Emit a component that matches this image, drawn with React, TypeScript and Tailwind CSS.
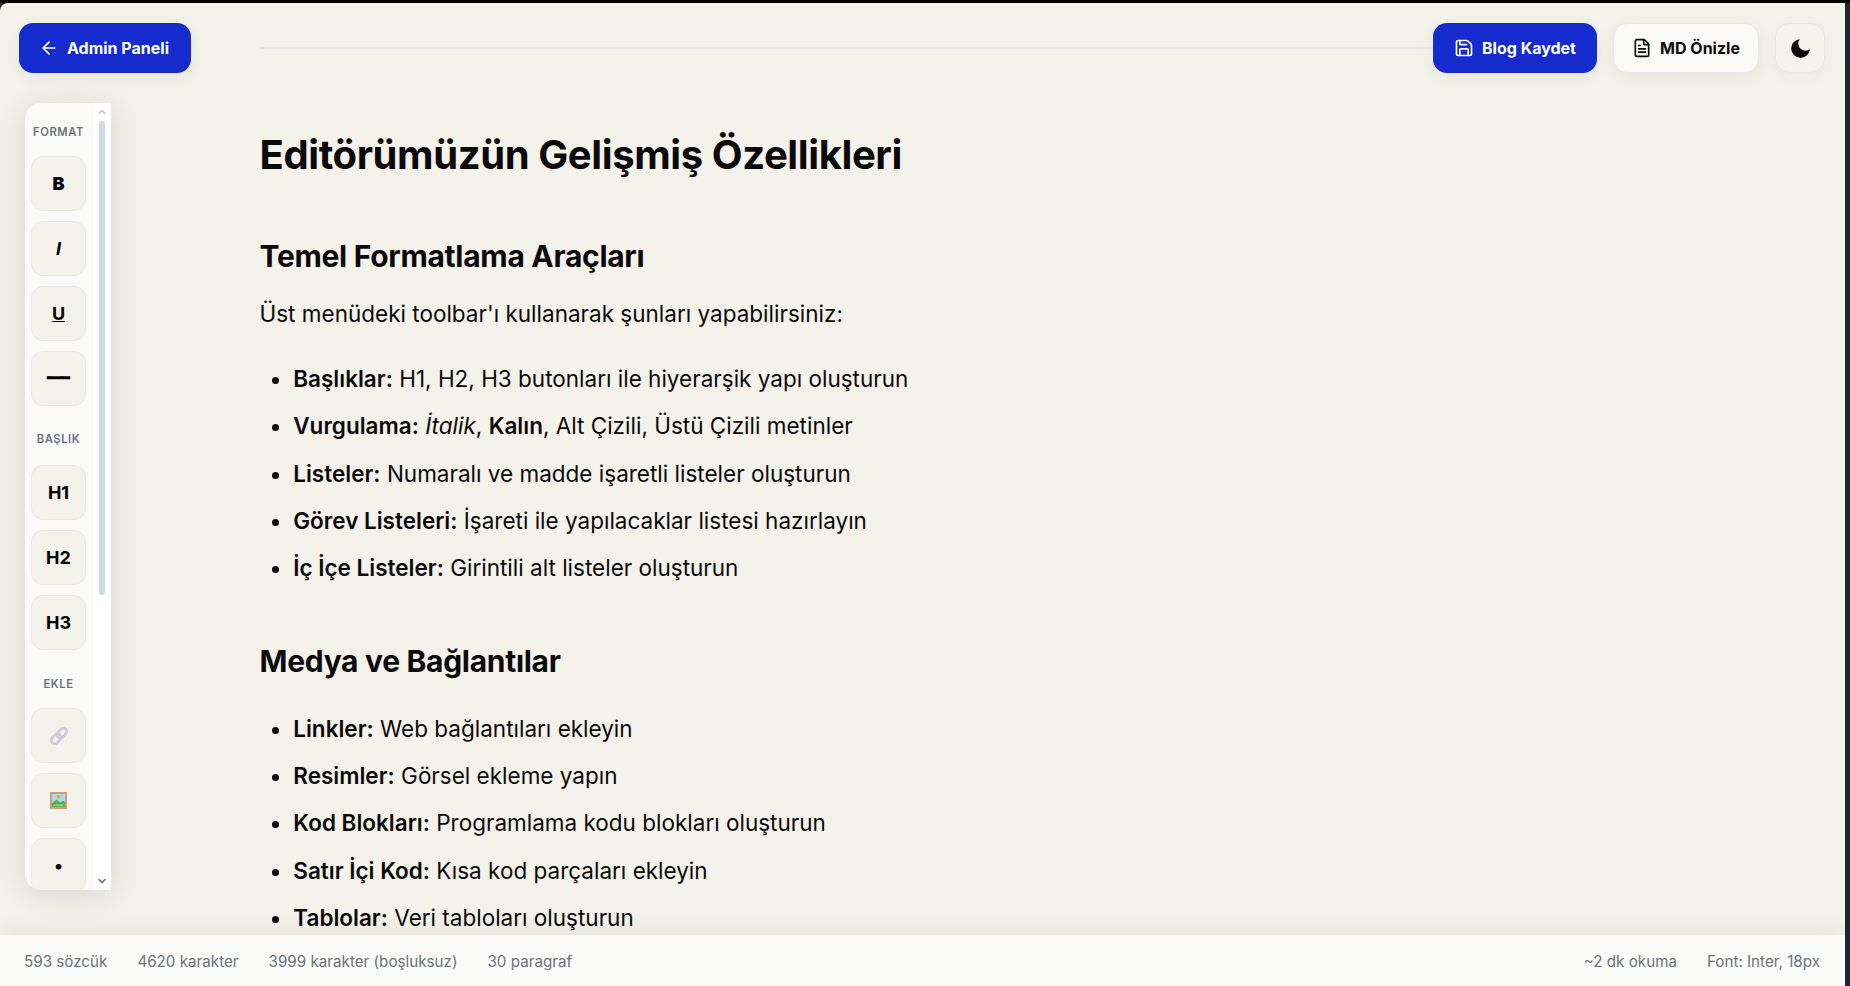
import { ArrowLeft, Save, FileText, ChevronUp, ChevronDown } from "lucide-react";
import type { ReactNode } from "react";

const inter = "font-['Inter',sans-serif]";

function ToolButton({ children }: { children: ReactNode }) {
  return (
    <button className="w-[55px] h-[55px] shrink-0 rounded-[12px] bg-[#f3f2eb] border border-[#e8e8e8] flex items-center justify-center text-[18px] font-bold text-black">
      {children}
    </button>
  );
}

function SideLabel({ children }: { children: ReactNode }) {
  return (
    <div className="text-[11.2px] leading-[14px] font-semibold tracking-[0.6px] text-[#6b7280] text-center mb-[7px]">
      {children}
    </div>
  );
}

function LinkEmoji() {
  return (
    <svg width="20" height="20" viewBox="0 0 20 20" fill="none">
      <g transform="rotate(-45 10 10)" stroke="#cfc6d8" strokeWidth="2.6">
        <rect x="0.5" y="6.5" width="11" height="7" rx="3.5" />
        <rect x="8.5" y="6.5" width="11" height="7" rx="3.5" />
      </g>
    </svg>
  );
}

function PictureEmoji() {
  return (
    <svg width="17" height="17" viewBox="0 0 18 18">
      <rect width="18" height="18" fill="#d99a6c" />
      <rect x="2" y="2" width="14" height="14" fill="#a8dcf2" />
      <circle cx="9" cy="5" r="2" fill="#f5a623" />
      <path d="M2 12 L7 8 L11 11 L14 9 L16 11 V16 H2 Z" fill="#4cb050" />
      <rect x="4" y="13" width="10" height="2" fill="#8ed46a" />
    </svg>
  );
}

function Sidebar() {
  return (
    <aside className="w-[86px] h-[787px] rounded-l-[16px] bg-[#fafaf8] shadow-[0_4px_32px_rgba(0,0,0,0.12)] flex overflow-hidden">
      <div className="w-[68px] shrink-0 h-full overflow-hidden flex flex-col items-center pt-[22px] pr-[1px] gap-[10px]">
        <SideLabel>FORMAT</SideLabel>
        <ToolButton>
          <span className="font-black">B</span>
        </ToolButton>
        <ToolButton>
          <em>I</em>
        </ToolButton>
        <ToolButton>
          <span className="underline">U</span>
        </ToolButton>
        <ToolButton>
          <span className="inline-block mb-[3px] line-through decoration-[6px] leading-none font-black text-[17px] scale-y-[0.5]">~~</span>
        </ToolButton>
        <div className="mt-[16px] mb-[2px]">
          <SideLabel>BAŞLIK</SideLabel>
        </div>
        <ToolButton>H1</ToolButton>
        <ToolButton>H2</ToolButton>
        <ToolButton>H3</ToolButton>
        <div className="mt-[17px]">
          <SideLabel>EKLE</SideLabel>
        </div>
        <ToolButton>
          <LinkEmoji />
        </ToolButton>
        <ToolButton>
          <PictureEmoji />
        </ToolButton>
        <ToolButton>•</ToolButton>
      </div>
      <div className="w-[18px] bg-white flex flex-col items-center relative">
        <ChevronUp size={12} strokeWidth={3} className="text-[#c4c4c4] mt-[3px] shrink-0" />
        <div className="w-[6px] h-[474px] mt-[3px] rounded-full bg-[#cfd8e3]" />
        <ChevronDown size={12} strokeWidth={3} className="text-[#666] absolute bottom-[3px]" />
      </div>
    </aside>
  );
}

function ListItem({ children }: { children: ReactNode }) {
  return <li className="mb-[15.75px]">{children}</li>;
}

function Strong({ children }: { children: ReactNode }) {
  return <b className="font-semibold">{children}</b>;
}

export default function App() {
  return (
    <div className={`w-[1850px] h-[986px] bg-[#1f2430] overflow-hidden ${inter}`}>
      <div className="h-[3px] bg-black" />
      <div className="w-[1845px] h-[983px] bg-[#f3f2eb] rounded-tl-[8px] flex flex-col overflow-hidden">
        <div className="flex-1 min-h-0 flex overflow-hidden">
          <div className="w-[260px] shrink-0 pl-[19px] pt-[20px]">
            <button className="w-[172px] h-[50px] pr-[2px] rounded-[14px] bg-[#162bce] text-white text-[16px] font-bold flex items-center justify-center gap-[8px] shadow-[0_4px_16px_rgba(0,0,0,0.06)]">
              <ArrowLeft size={20} />
              Admin Paneli
            </button>
            <div className="mt-[30px] ml-[6px]">
              <Sidebar />
            </div>
          </div>
          <div className="flex-1 min-w-0 flex flex-col">
            <div className="flex items-center h-[50px] mt-[20px] pr-[20px]">
              <div className="flex-1 h-[2px] bg-[#e5e7eb]" />
              <button className="w-[164px] h-[50px] rounded-[14px] bg-[#162bce] text-white text-[16px] font-bold flex items-center justify-center gap-[8px] shadow-[0_4px_16px_rgba(0,0,0,0.06)]">
                <Save size={20} />
                Blog Kaydet
              </button>
              <button className="ml-[16px] w-[146px] h-[50px] rounded-[14px] bg-[#fafaf8] border border-[#e5e7eb] text-[#0a0a0a] text-[16px] font-bold flex items-center justify-center gap-[8px] shadow-[0_4px_16px_rgba(0,0,0,0.06)]">
                <FileText size={20} />
                MD Önizle
              </button>
              <button className="ml-[16px] w-[50px] h-[50px] rounded-[14px] bg-[#f3f2eb] border border-[#e5e7eb] flex items-center justify-center shadow-[0_4px_16px_rgba(0,0,0,0.03)]">
                <svg width="25" height="25" viewBox="0 0 24 24" fill="#0a0a0a">
                  <path d="M21 12.79A9 9 0 1 1 11.21 3 7 7 0 0 0 21 12.79z" />
                </svg>
              </button>
            </div>
            <article className="-ml-[0.5px] text-[#0a0a0a] text-[22.5px] leading-[31.5px] pt-[54px]">
              <h1 className="text-[40px] leading-[56px] tracking-[-0.01em] font-bold mb-[53px]">Editörümüzün Gelişmiş Özellikleri</h1>
              <h2 className="text-[30px] leading-[40px] tracking-[-0.01em] font-bold mb-[22px]">Temel Formatlama Araçları</h2>
              <p className="mb-[33.5px]">Üst menüdeki toolbar'ı kullanarak şunları yapabilirsiniz:</p>
              <ul className="list-disc pl-[33.75px] mb-[57.25px]">
                <ListItem><Strong>Başlıklar:</Strong> H1, H2, H3 butonları ile hiyerarşik yapı oluşturun</ListItem>
                <ListItem><Strong>Vurgulama:</Strong> <em>İtalik</em>, <Strong>Kalın</Strong>, Alt Çizili, Üstü Çizili metinler</ListItem>
                <ListItem><Strong>Listeler:</Strong> Numaralı ve madde işaretli listeler oluşturun</ListItem>
                <ListItem><Strong>Görev Listeleri:</Strong> İşareti ile yapılacaklar listesi hazırlayın</ListItem>
                <ListItem><Strong>İç İçe Listeler:</Strong> Girintili alt listeler oluşturun</ListItem>
              </ul>
              <h2 className="text-[30px] leading-[40px] tracking-[-0.01em] font-bold mb-[32px]">Medya ve Bağlantılar</h2>
              <ul className="list-disc pl-[33.75px]">
                <ListItem><Strong>Linkler:</Strong> Web bağlantıları ekleyin</ListItem>
                <ListItem><Strong>Resimler:</Strong> Görsel ekleme yapın</ListItem>
                <ListItem><Strong>Kod Blokları:</Strong> Programlama kodu blokları oluşturun</ListItem>
                <ListItem><Strong>Satır İçi Kod:</Strong> Kısa kod parçaları ekleyin</ListItem>
                <ListItem><Strong>Tablolar:</Strong> Veri tabloları oluşturun</ListItem>
              </ul>
            </article>
          </div>
        </div>
        <footer className="h-[51px] shrink-0 bg-[#fafaf8] flex items-center justify-between pt-[3px] pl-[24px] pr-[25px] text-[15.2px] text-[#6b7280] shadow-[0_-2px_24px_rgba(0,0,0,0.08)] relative">
          <div className="flex gap-[30px]">
            <span>593 sözcük</span>
            <span>4620 karakter</span>
            <span>3999 karakter (boşluksuz)</span>
            <span>30 paragraf</span>
          </div>
          <div className="flex gap-[30px]">
            <span>~2 dk okuma</span>
            <span>Font: Inter, 18px</span>
          </div>
        </footer>
      </div>
    </div>
  );
}
